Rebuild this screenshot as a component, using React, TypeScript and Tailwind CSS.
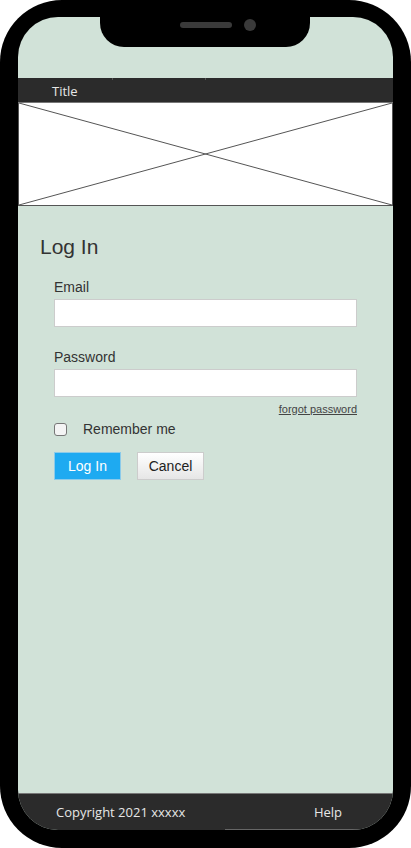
import React from "react";

const sans = { fontFamily: '"Liberation Sans", Arial, sans-serif' };

const App: React.FC = () => {
  return (
    <div className="w-[411px] h-[848px] bg-white">
      <div className="relative w-[411px] h-[848px] bg-black rounded-[62px] pt-[17px] px-[18px]">
        <div className="relative w-[375px] h-[813px] bg-[#d1e2d8] rounded-[40px] overflow-hidden flex flex-col">
          {/* notch */}
          <div className="absolute left-[82px] top-0 w-[210px] h-[30px] bg-black rounded-b-[24px]">
            <div className="flex items-center h-[12px] mt-[2px] pl-[80px] gap-[12px]">
              <div className="w-[52px] h-[6px] rounded-full bg-[#3a3a3a]" />
              <div className="w-[12px] h-[12px] rounded-full bg-[#3a3a3a]" />
            </div>
          </div>

          <div className="h-[61px] shrink-0" />

          {/* title bar */}
          <div className="relative h-[25px] shrink-0 bg-[#2b2b2b] border-b border-[#777] flex items-center pl-[34px] pt-[3px]">
            <span className="text-[13px] text-[#e6e6e6]" style={{ fontFamily: '"Open Sans", sans-serif' }}>
              Title
            </span>
            <div className="absolute left-[94px] top-0 w-px h-[2px] bg-[#555]" />
            <div className="absolute left-[187px] top-0 w-px h-[2px] bg-[#555]" />
          </div>

          {/* image placeholder */}
          <div className="h-[103px] shrink-0 bg-white border border-t-0 border-[#555]">
            <svg className="w-full h-full block" viewBox="0 0 100 100" preserveAspectRatio="none">
              <line x1="0" y1="0" x2="100" y2="100" stroke="#555" strokeWidth="1" vectorEffect="non-scaling-stroke" />
              <line x1="100" y1="0" x2="0" y2="100" stroke="#555" strokeWidth="1" vectorEffect="non-scaling-stroke" />
            </svg>
          </div>

          {/* form */}
          <div className="flex flex-col pl-[22px] pr-[36px] pt-[28px]" style={sans}>
            <h1 className="text-[21px] leading-[26px] text-[#333]">Log In</h1>
            <div className="flex flex-col pl-[14px] mt-[19px]">
              <label className="text-[14px] leading-[16px] text-[#333]">Email</label>
              <input className="mt-[4px] h-[28px] w-full bg-white border border-[#ccc] outline-none" />
              <label className="mt-[22px] text-[14px] leading-[16px] text-[#333]">Password</label>
              <input type="password" className="mt-[4px] h-[28px] w-full bg-white border border-[#ccc] outline-none" />
              <div className="flex justify-end mt-[6px]">
                <a className="text-[11px] leading-[13px] text-[#444] underline">forgot password</a>
              </div>
              <div className="flex items-center mt-[5px] h-[16px]">
                <span className="w-[13px] h-[13px] rounded-[3px] border border-[#777] bg-[#f4f4f4]" />
                <span className="ml-[16px] text-[14px] leading-[16px] text-[#333]">Remember me</span>
              </div>
              <div className="flex gap-[16px] mt-[15px]">
                <button className="w-[67px] h-[28px] bg-[#1eaaf1] border border-[#8ccbea] text-white text-[14px]">
                  Log In
                </button>
                <button className="w-[67px] h-[28px] bg-gradient-to-b from-white to-[#e6e6e6] border border-[#ccc] text-[#222] text-[14px]">
                  Cancel
                </button>
              </div>
            </div>
          </div>

          {/* footer */}
          <div className="relative mt-auto h-[37px] shrink-0 bg-[#2b2b2b] border-t border-[#777] flex items-center justify-between pl-[38px] pr-[51px] pt-[1px]" style={{ fontFamily: '"Open Sans", sans-serif' }}>
            <span className="text-[13px] text-[#e6e6e6]">Copyright 2021 xxxxx</span>
            <span className="text-[13px] text-[#e6e6e6]">Help</span>
            <div className="absolute left-[207px] bottom-0 w-[137px] h-px bg-[#666]" />
          </div>
        </div>
      </div>
    </div>
  );
};

export default App;
